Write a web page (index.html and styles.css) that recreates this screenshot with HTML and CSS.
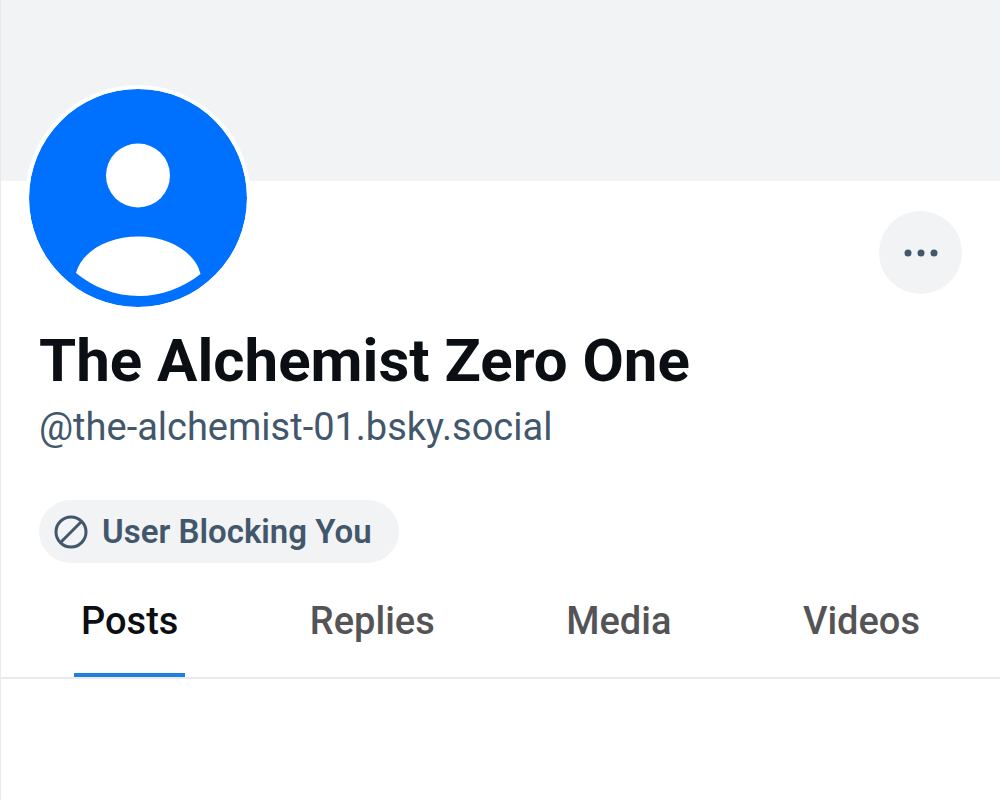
FILE: index.html
```html
<!DOCTYPE html>
<html lang="en">
<head>
    <meta charset="UTF-8">
    <meta name="viewport" content="width=device-width, initial-scale=1.0">
    <title>The Alchemist Zero One</title>
    <link rel="stylesheet" href="styles.css">
</head>
<body>
    <main class="profile">
        <div class="banner"></div>
        <header class="profile-header">
            <div class="profile-top">
                <svg class="avatar" viewBox="0 0 218 218" role="img" aria-label="Profile picture">
                    <circle cx="109" cy="109" r="109" fill="#0070ff"/>
                    <circle cx="109" cy="86.500" r="32" fill="#fff"/>
                    <path d="M47 184C53 162 79 147.500 109.500 147.500S166 163 171.500 185C154 199 132 207 110 207C86 207 64 198 47 184Z" fill="#fff"/>
                </svg>
                <button class="more" type="button" aria-label="More options">
                    <svg width="36" height="8" viewBox="0 0 36 8" fill="#42576c">
                        <circle cx="5" cy="4" r="3.500"/>
                        <circle cx="18" cy="4" r="3.500"/>
                        <circle cx="31" cy="4" r="3.500"/>
                    </svg>
                </button>
            </div>
            <h1 class="name">The Alchemist Zero One</h1>
            <p class="handle">@the-alchemist-01.bsky.social</p>
            <button class="label" type="button">
                <svg width="34" height="34" viewBox="0 0 34 34" fill="none" stroke="#42576c" stroke-width="3">
                    <circle cx="17" cy="17" r="15"/>
                    <path d="M6.500 27.500L27.500 6.500"/>
                </svg>
                User Blocking You
            </button>
        </header>
        <nav class="tabs">
            <a class="tab active" href="#posts">Posts</a>
            <a class="tab" href="#replies">Replies</a>
            <a class="tab" href="#media">Media</a>
            <a class="tab" href="#videos">Videos</a>
        </nav>
    </main>
</body>
</html>
```
FILE: styles.css
```css
* {
    box-sizing: border-box;
}
body {
    margin: 0;
    background-color: #fff;
    color: #0b0f14;
    font-family: Roboto, "Liberation Sans", sans-serif;
}
.profile {
    min-height: 100vh;
    border-left: 1px solid #e9eaec;
}
.banner {
    height: 181px;
    background-color: #f1f3f5;
}
.profile-header {
    padding: 0 38px;
}
/* pulls the avatar up over the banner */
.profile-top {
    display: flex;
    justify-content: space-between;
    align-items: flex-end;
    margin: -96px 0 0 -14px;
}
.avatar {
    width: 226px;
    height: 226px;
    border: 4px solid #fff;
    border-radius: 50%;
    background-color: #fff;
}
.more {
    display: flex;
    align-items: center;
    justify-content: center;
    width: 83px;
    height: 83px;
    margin-bottom: 17px;
    padding: 0;
    border: 0;
    border-radius: 50%;
    background-color: #f1f3f5;
}
.name {
    margin: 12px 0 0;
    font-size: 60px;
    font-weight: 700;
    line-height: 76px;
}
.handle {
    margin: 2px 0 0;
    color: #42576c;
    font-size: 38px;
    line-height: 52px;
}
.label {
    display: inline-flex;
    align-items: center;
    gap: 14px;
    height: 63px;
    margin-top: 47px;
    padding: 0 27px 0 15px;
    border: 0;
    border-radius: 32px;
    background-color: #f1f3f5;
    color: #42576c;
    font-family: inherit;
    font-size: 33px;
    font-weight: 600;
}
.tabs {
    display: flex;
    justify-content: space-between;
    margin-top: 32px;
    padding: 0 73px;
    border-bottom: 2px solid #e9eaec;
}
.tab {
    padding: 0 7px 26px;
    border-bottom: 4px solid transparent;
    color: #545457;
    font-size: 38px;
    font-weight: 500;
    line-height: 52px;
    text-decoration: none;
}
.active {
    border-color: #2080dc;
    color: #0b0f14;
}
```
